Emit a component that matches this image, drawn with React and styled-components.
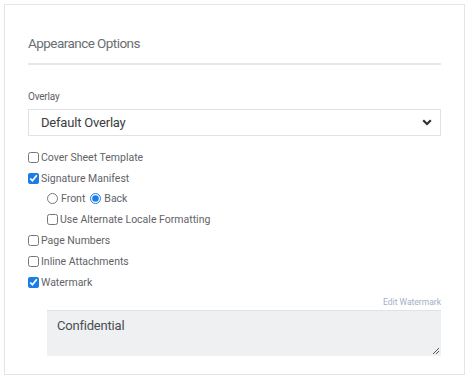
import React from "react";
import styled, { createGlobalStyle } from "styled-components";

const Global = createGlobalStyle`
  html, body { margin: 0; padding: 0; background: #fff; }
  body { font-family: Roboto, "Liberation Sans", sans-serif; }
`;

const Card = styled.div`
  margin: 4px 0 0 4px;
  width: 461px;
  height: 371px;
  box-sizing: border-box;
  border: 1px solid #e3e5e8;
  padding: 30px 23px 0 23px;
`;

const Title = styled.h2`
  margin: 0;
  font-size: 13.5px;
  font-weight: 400;
  color: #6a6e73;
  letter-spacing: -0.55px;
  line-height: 16px;
  padding-bottom: 12px;
  border-bottom: 2px solid #e6e9ec;
`;

const FieldLabel = styled.div`
  margin-top: 26px;
  font-size: 10px;
  color: #5d6167;
  line-height: 12px;
  letter-spacing: -0.2px;
`;

const SelectWrap = styled.div`
  margin-top: 6px;
  height: 27px;
  box-sizing: border-box;
  border: 1px solid #dfe3e7;
  display: flex;
  align-items: center;
  padding: 0 8px 0 12px;
  justify-content: space-between;
`;

const SelectText = styled.span`
  font-size: 13px;
  color: #3a3d41;
  letter-spacing: -0.2px;
`;

const Options = styled.div`
  margin-top: 11px;
  display: flex;
  flex-direction: column;
`;

const Row = styled.label`
  display: flex;
  align-items: center;
  height: 20.8px;
  padding-left: ${(p) => (p.$indent ? 19 : 0)}px;
  font-size: 10.5px;
  color: #5f6368;
  gap: 2px;
`;

const Check = styled.input.attrs({ type: "checkbox" })`
  margin: 0;
  width: 11px;
  height: 11px;
  accent-color: #1a7ee6;
`;

const Radio = styled.input.attrs({ type: "radio" })`
  margin: 0 1px 0 0;
  width: 11px;
  height: 11px;
  accent-color: #1a7ee6;
`;

const RadioGroup = styled.span`
  display: inline-flex;
  align-items: center;
  gap: 2px;
  margin-right: 3px;
`;

const EditLink = styled.div`
  margin-top: 4px;
  text-align: right;
  font-size: 8.5px;
  color: #9fb1c2;
  line-height: 10px;
`;

const TextArea = styled.div`
  position: relative;
  margin: 3px 0 0 19px;
  height: 46px;
  box-sizing: border-box;
  background: #eef0f2;
  border-top: 1px solid #e0e3e6;
  padding: 7px 10px;
  font-size: 13px;
  color: #4a4d52;
  letter-spacing: -0.2px;
`;

const Grip = styled.svg`
  position: absolute;
  right: 1px;
  bottom: 1px;
`;

export default function App() {
  return (
    <>
      <Global />
      <Card>
        <Title>Appearance Options</Title>
        <FieldLabel>Overlay</FieldLabel>
        <SelectWrap>
          <SelectText>Default Overlay</SelectText>
          <svg width="10" height="7" viewBox="0 0 10 7">
            <path d="M1.2 1.2 L5 5 L8.8 1.2" fill="none" stroke="#2d3135" strokeWidth="2.2" />
          </svg>
        </SelectWrap>
        <Options>
          <Row><Check readOnly />Cover Sheet Template</Row>
          <Row><Check readOnly checked />Signature Manifest</Row>
          <Row $indent>
            <RadioGroup><Radio name="side" readOnly />Front</RadioGroup>
            <RadioGroup><Radio name="side" readOnly checked />Back</RadioGroup>
          </Row>
          <Row $indent><Check readOnly />Use Alternate Locale Formatting</Row>
          <Row><Check readOnly />Page Numbers</Row>
          <Row><Check readOnly />Inline Attachments</Row>
          <Row><Check readOnly checked />Watermark</Row>
        </Options>
        <EditLink>Edit Watermark</EditLink>
        <TextArea>
          Confidential
          <Grip width="9" height="9" viewBox="0 0 9 9">
            <path d="M8 2 L2 8 M8 5 L5 8" stroke="#555" strokeWidth="1" />
          </Grip>
        </TextArea>
      </Card>
    </>
  );
}
